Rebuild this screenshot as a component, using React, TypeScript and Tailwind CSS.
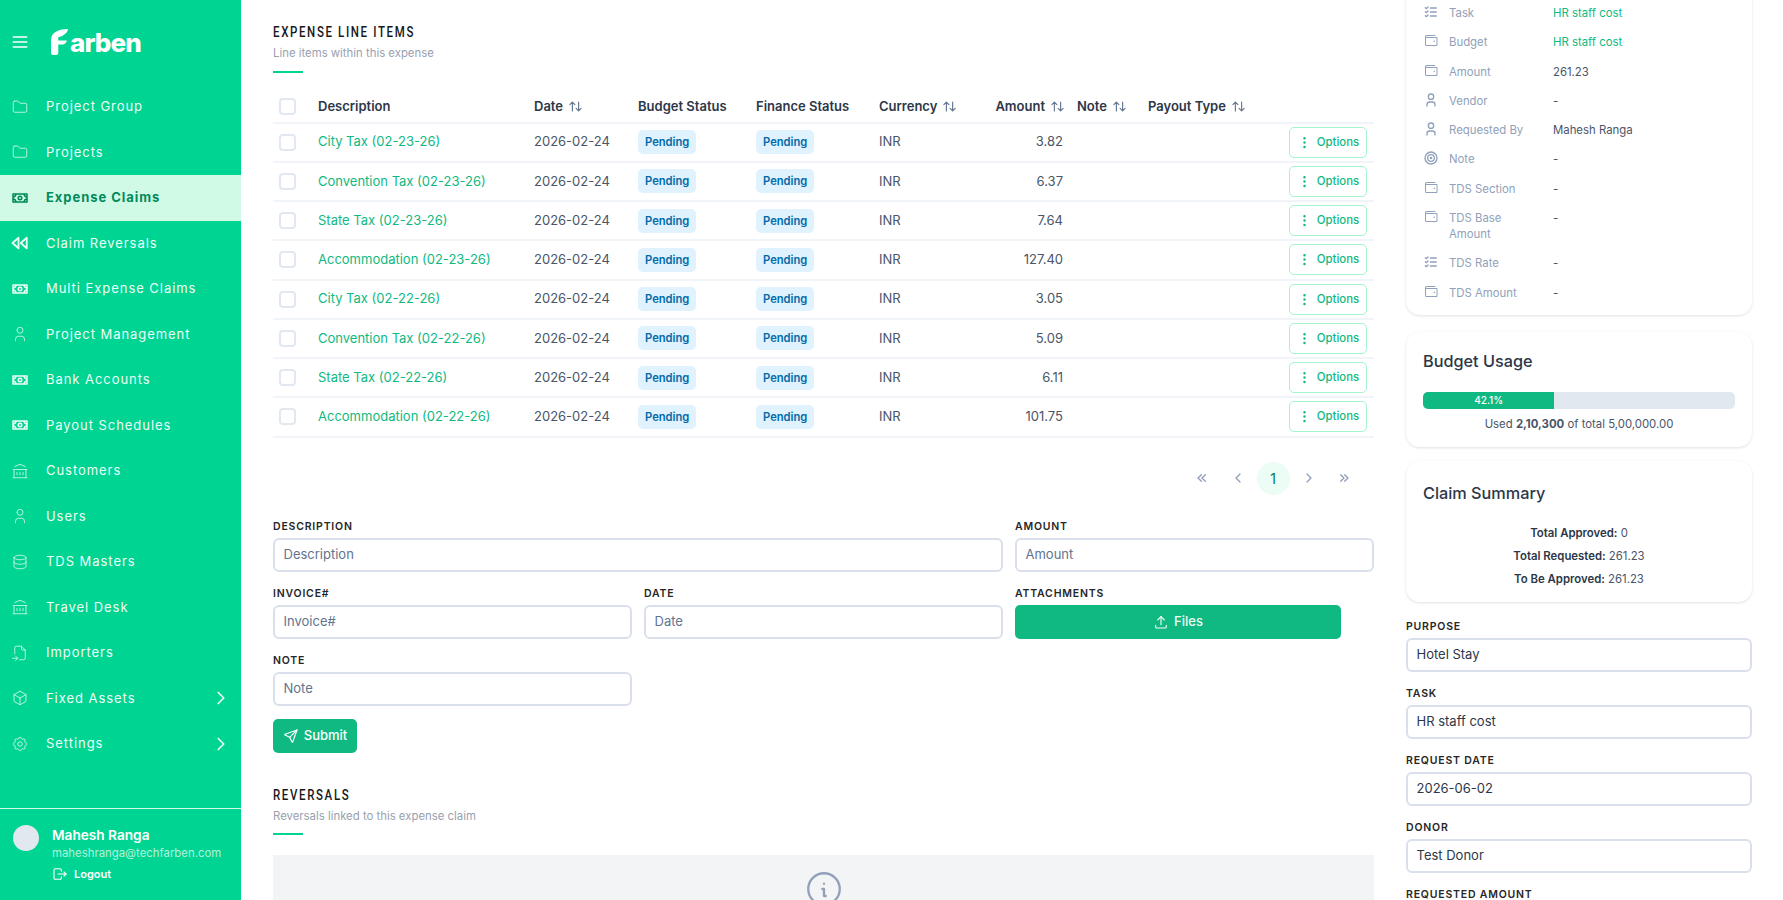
import React from "react";
import {
  TbMenu2, TbFolder, TbPlayerTrackPrev, TbUser, TbBuildingBank, TbDatabase, TbFileImport, TbBox, TbSettings,
  TbChevronRight, TbLogout, TbArrowsSort, TbDotsVertical, TbChevronsLeft, TbChevronLeft, TbChevronsRight, TbUpload, TbSend, TbListCheck, TbTarget, TbInfoCircle,
} from "react-icons/tb";
import { PiMoneyBold, PiWallet } from "react-icons/pi";

const nav: [string, any, boolean?][] = [
  ["Project Group", TbFolder], ["Projects", TbFolder], ["Expense Claims", PiMoneyBold], ["Claim Reversals", TbPlayerTrackPrev],
  ["Multi Expense Claims", PiMoneyBold], ["Project Management", TbUser], ["Bank Accounts", PiMoneyBold], ["Payout Schedules", PiMoneyBold],
  ["Customers", TbBuildingBank], ["Users", TbUser], ["TDS Masters", TbDatabase], ["Travel Desk", TbBuildingBank],
  ["Importers", TbFileImport], ["Fixed Assets", TbBox, true], ["Settings", TbSettings, true],
];
const rows: [string, string][] = [
  ["City Tax (02-23-26)", "3.82"], ["Convention Tax (02-23-26)", "6.37"], ["State Tax (02-23-26)", "7.64"], ["Accommodation (02-23-26)", "127.40"],
  ["City Tax (02-22-26)", "3.05"], ["Convention Tax (02-22-26)", "5.09"], ["State Tax (02-22-26)", "6.11"], ["Accommodation (02-22-26)", "101.75"],
];
const details: [any, string, string, boolean?][] = [
  [TbListCheck, "Task", "HR staff cost", true], [PiWallet, "Budget", "HR staff cost", true], [PiWallet, "Amount", "261.23"],
  [TbUser, "Vendor", "-"], [TbUser, "Requested By", "Mahesh Ranga"], [TbTarget, "Note", "-"], [PiWallet, "TDS Section", "-"],
  [PiWallet, "TDS Base Amount", "-"], [TbListCheck, "TDS Rate", "-"], [PiWallet, "TDS Amount", "-"],
];

function Heading({ title, sub }: { title: string; sub: string }) {
  return (
    <div>
      <div className="origin-left scale-x-[0.82] whitespace-nowrap text-[14px] leading-[20px] font-medium tracking-[2px] text-[#18181b] [font-family:Roboto,sans-serif]">{title}</div>
      <div className="mt-[3px] text-[11.375px] leading-[16px] text-gray-400">{sub}</div>
      <div className="mt-[9.5px] h-[2px] w-[30px] bg-emerald-400" />
    </div>
  );
}
function Sort() {
  return <TbArrowsSort className="ml-[5px] inline-block size-[15px] align-[-3px] text-slate-500" strokeWidth={1.8} />;
}
function Field({ label, placeholder, value, className = "" }: { label: string; placeholder?: string; value?: string; className?: string }) {
  return (
    <div className={className}>
      <div className="text-[10.5px] leading-[16px] font-semibold uppercase tracking-[0.8px] text-neutral-800">{label}</div>
      <div className={`mt-[3px] flex h-[34px] items-center rounded-[6px] border-2 border-[#d9e0ec] bg-white px-[8.5px] text-[13px] ${value ? "text-[#2d3748]" : "text-slate-500"}`}>
        {value ?? placeholder}
      </div>
    </div>
  );
}
function Pending() {
  return <span className="inline-block rounded-[5px] bg-sky-100 px-[7px] py-[4px] text-[11.2px] leading-[16px] font-semibold text-sky-700">Pending</span>;
}

export default function App() {
  return (
    <div className="flex h-[900px] overflow-hidden bg-white text-[#4a5568] [font-family:Inter,sans-serif]">
      <aside className="flex w-[241px] shrink-0 flex-col bg-emerald-400 text-white">
        <div className="flex h-[84px] shrink-0 items-center pl-[10px]">
          <TbMenu2 className="size-[20px]" />
          <div className="ml-[21px] flex items-end" aria-label="Farben">
            <svg viewBox="0 0 14 25" preserveAspectRatio="none" className="h-[26px] w-[17px] fill-white">
              <path d="M0 11C0 4 5 0 14 0C13.5 4 10 7 6 8V11H13C13 13 11 15 9 15H6V23Q6 25 3 25Q0 25 0 23Z" />
            </svg>
            <span className="ml-[2px] text-[26px] font-extrabold leading-[25px] tracking-[-0.9px]">arben</span>
          </div>
        </div>
        <nav className="flex flex-col">
          {nav.map(([label, Icon, chev]) => {
            const active = label === "Expense Claims";
            const money = Icon === PiMoneyBold;
            return (
              <div key={label} className={`flex h-[45.5px] items-center pl-[11px] pr-[9px] text-[13px] tracking-[0.95px] ${active ? "bg-emerald-100 font-bold text-[#008a5c]" : "text-emerald-50"}`}>
                <div className="flex size-[18px] shrink-0 items-center justify-center">
                  <Icon className={money ? "size-[16px]" : "size-[18px]"} strokeWidth={Icon === TbPlayerTrackPrev ? 2.4 : undefined} />
                </div>
                <span className="ml-[17px] flex-1">{label}</span>
                {chev && <TbChevronRight className="size-[22px]" strokeWidth={1.8} />}
              </div>
            );
          })}
        </nav>
        <div className="mt-auto flex h-[92px] border-t border-emerald-100 pl-[13px] pt-[16px]">
          <div className="size-[26px] rounded-full bg-slate-200" />
          <div className="ml-[13px]">
            <div className="text-[13.65px] leading-[20px] font-semibold">Mahesh Ranga</div>
            <div className="text-[11.375px] leading-[16px] text-[#b3f2da]">maheshranga@techfarben.com</div>
            <div className="mt-[5px] flex items-center text-[11px] font-semibold leading-[16px]">
              <TbLogout className="size-[16px]" strokeWidth={1.6} /><span className="ml-[6px]">Logout</span>
            </div>
          </div>
        </div>
      </aside>

      <main className="ml-[32px] w-[1101px] shrink-0 pt-[22px]">
        <Heading title="EXPENSE LINE ITEMS" sub="Line items within this expense" />
        <table className="mt-[19px] w-full table-fixed border-collapse text-[13px]">
          <colgroup>
            <col className="w-[45px]" /><col className="w-[216px]" /><col className="w-[104px]" /><col className="w-[118px]" />
            <col className="w-[123px]" /><col className="w-[98px]" /><col className="w-[94px]" /><col className="w-[71px]" /><col className="w-[138px]" /><col />
          </colgroup>
          <thead>
            <tr className="h-[31px] border-b-2 border-slate-100 text-left text-[#2d3748]">
              <th className="pl-[6px]"><div className="size-[17px] rounded-[4px] border-2 border-slate-200" /></th>
              <th className="font-semibold">Description</th>
              <th className="font-semibold">Date<Sort /></th>
              <th className="font-semibold">Budget Status</th>
              <th className="font-semibold">Finance Status</th>
              <th className="font-semibold">Currency<Sort /></th>
              <th className="pr-[6px] text-right font-semibold">Amount<Sort /></th>
              <th className="pl-[6px] font-semibold">Note<Sort /></th>
              <th className="pl-[6px] font-semibold">Payout Type<Sort /></th>
              <th />
            </tr>
          </thead>
          <tbody>
            {rows.map(([d, a]) => (
              <tr key={d} className="h-[39.25px] border-b-2 border-slate-100">
                <td className="pl-[6px]"><div className="size-[17px] rounded-[4px] border-2 border-slate-200" /></td>
                <td className="text-[#10b981]">{d}</td>
                <td>2026-02-24</td>
                <td><Pending /></td>
                <td><Pending /></td>
                <td>INR</td>
                <td className="pr-[8px] text-right">{a}</td>
                <td /><td />
                <td className="pr-[7px]">
                  <div className="ml-auto flex h-[31px] w-[78px] items-center justify-center rounded-[5px] border border-emerald-200 text-[11.375px] font-medium text-[#10b981]">
                    <TbDotsVertical className="mr-[5px] size-[15px]" />Options
                  </div>
                </td>
              </tr>
            ))}
          </tbody>
        </table>
        <div className="mr-[13.5px] mt-[24px] flex justify-end gap-[2.5px] text-slate-400">
          {[TbChevronsLeft, TbChevronLeft, null, TbChevronRight, TbChevronsRight].map((I, i) => (
            <div key={i} className={`flex size-[33px] items-center justify-center rounded-full ${I ? "" : "bg-emerald-50 text-[14px] text-emerald-700"}`}>
              {I ? <I className="size-[16px]" /> : "1"}
            </div>
          ))}
        </div>
        <div className="mt-[24px] grid grid-cols-3 gap-x-[12px] gap-y-[14px]">
          <Field className="col-span-2" label="Description" placeholder="Description" />
          <Field label="Amount" placeholder="Amount" />
          <Field label="Invoice#" placeholder="Invoice#" />
          <Field label="Date" placeholder="Date" />
          <div>
            <div className="text-[10.5px] leading-[16px] font-semibold uppercase tracking-[0.8px] text-neutral-800">Attachments</div>
            <div className="mt-[3px] flex h-[34px] w-[326px] items-center justify-center rounded-[5px] bg-[#10b981] text-[13px] font-medium text-emerald-50">
              <TbUpload className="mr-[5px] size-[16px]" strokeWidth={1.7} />Files
            </div>
          </div>
          <Field label="Note" placeholder="Note" />
        </div>
        <div className="mt-[13px] flex h-[34px] w-[84px] items-center justify-center rounded-[5px] bg-[#10b981] text-[13px] font-medium text-white">
          <TbSend className="mr-[5px] size-[16px]" strokeWidth={1.7} />Submit
        </div>
        <div className="mt-[32px]"><Heading title="REVERSALS" sub="Reversals linked to this expense claim" /></div>
        <div className="mt-[20px] flex h-[200px] justify-center bg-gray-100 pt-[13px]">
          <TbInfoCircle className="size-[42px] text-slate-400" strokeWidth={1.3} />
        </div>
      </main>

      <aside className="ml-[32px] w-[346px] shrink-0">
        <div className="-mt-[20px] rounded-[14px] bg-white px-[17px] pb-[14px] pt-[25px] shadow-[0_1px_3px_rgba(0,0,0,0.12)]">
          <div className="flex flex-col text-[11.375px] leading-[16px]">
            {details.map(([I, l, v, link]) => (
              <div key={l} className="flex pb-[13.3px] last:pb-0">
                <div className="-mt-[1px] flex size-[16px] shrink-0 items-center justify-center"><I className="size-[16px] text-slate-400" /></div>
                <div className="ml-[10px] mr-[12px] w-[92px] shrink-0 text-slate-400">{l}</div>
                <div className={link ? "text-[#10b981]" : "text-[#4a5568]"}>{v}</div>
              </div>
            ))}
          </div>
        </div>
        <div className="mt-[17px] rounded-[14px] bg-white px-[17px] pb-[15px] pt-[17px] shadow-[0_1px_3px_rgba(0,0,0,0.12)]">
          <div className="text-[16.25px] font-medium leading-[24px] text-[#2d3748]">Budget Usage</div>
          <div className="mt-[19px] h-[17px] overflow-hidden rounded-[5px] bg-slate-200">
            <div className="h-full w-[42.1%] bg-[#10b981] text-center text-[10px] font-medium leading-[17px] text-white">42.1%</div>
          </div>
          <div className="mt-[7px] text-center text-[11.375px] leading-[16px] text-[#4a5568]">Used <b>2,10,300</b> of total 5,00,000.00</div>
        </div>
        <div className="mt-[14px] rounded-[14px] bg-white px-[17px] pb-[15px] pt-[20px] shadow-[0_1px_3px_rgba(0,0,0,0.12)]">
          <div className="text-[16.25px] font-medium leading-[24px] text-[#2d3748]">Claim Summary</div>
          <div className="mt-[20px] flex flex-col gap-[7px] text-center text-[11.375px] leading-[16px] text-[#4a5568]">
            <div><b className="font-semibold text-[#2d3748]">Total Approved:</b> 0</div>
            <div><b className="font-semibold text-[#2d3748]">Total Requested:</b> 261.23</div>
            <div><b className="font-semibold text-[#2d3748]">To Be Approved:</b> 261.23</div>
          </div>
        </div>
        <div className="mt-[17px] flex flex-col gap-[14px]">
          <Field label="Purpose" value="Hotel Stay" />
          <Field label="Task" value="HR staff cost" />
          <Field label="Request Date" value="2026-06-02" />
          <Field label="Donor" value="Test Donor" />
          <div className="text-[10.5px] leading-[16px] font-semibold uppercase tracking-[0.8px] text-neutral-800">Requested Amount</div>
        </div>
      </aside>
    </div>
  );
}
